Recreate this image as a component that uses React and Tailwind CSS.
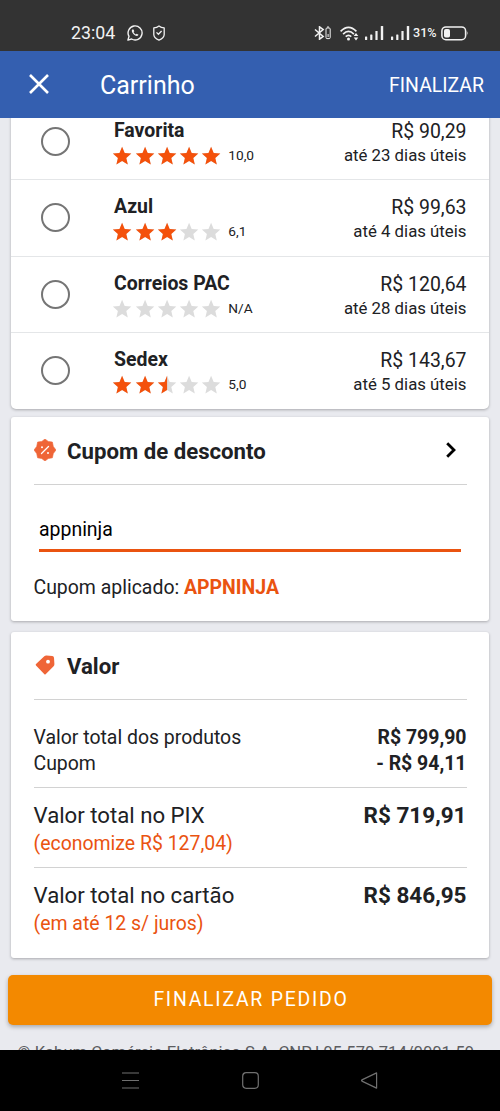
import React from "react";

const STAR = "M12 17.27L18.18 21l-1.64-7.03L22 9.24l-7.19-.61L12 2 9.19 8.63 2 9.24l5.46 4.73L5.82 21z";

function Star({ fill }) {
  return (
    <svg viewBox="0 0 24 24" className="h-[22.2px] w-[22.2px] shrink-0">
      <path d={STAR} fill="#dcdcdc" />
      {fill === 1 && <path d={STAR} fill="#f4510b" />}
      {fill === 0.5 && <path d="M12 2L9.19 8.63 2 9.24l5.46 4.73L5.82 21 12 17.27z" fill="#f4510b" />}
    </svg>
  );
}

function Signal() {
  return (
    <svg viewBox="0 0 19 14" className="h-[14px] w-[19px]" fill="#f2f2f2">
      <rect x="0" y="10.5" width="2.2" height="3.5" rx=".5" />
      <rect x="5.2" y="8.5" width="2.2" height="5.5" rx=".5" />
      <rect x="10.4" y="5" width="2.2" height="9" rx=".5" />
      <rect x="15.8" y="0" width="2.4" height="14" rx=".5" />
    </svg>
  );
}

function StatusBar() {
  return (
    <div className="flex h-[51px] shrink-0 items-end bg-[#333333] pl-[71px] text-[#f2f2f2]">
      <div className="flex h-[36px] w-full items-center">
        <span className="w-[56px] text-[17.800px] leading-none">23:04</span>
        <svg viewBox="0 0 16 16" className="h-[16px] w-[16px]" fill="none" stroke="#f2f2f2" strokeWidth="1.4">
          <path d="M.9 15.1L2 11.4A7 7 0 1 1 4.6 14z" strokeLinejoin="round" />
          <path d="M5.2 4.6c-.9 1-.3 2.8 1.2 4.4s3.600 2.500 4.600 1.500l.5-.8-1.800-1-.9.8C7.900 9.100 7 8.200 6.500 7.100l.8-.8-.8-1.900z" fill="#f2f2f2" stroke="none" />
        </svg>
        <svg viewBox="0 0 12 16" className="ml-[10px] h-[16px] w-[12px]" fill="none" stroke="#f2f2f2" strokeWidth="1.3">
          <path d="M6 .9Q8 2.500 11.200 2.900V9.500Q11.200 13 6 15.100Q.8 13 .8 9.500V2.900Q4 2.500 6 .9z" strokeLinejoin="round" />
          <path d="M3.500 7.400L5.400 9.300L8.600 6" />
        </svg>
        <svg viewBox="0 0 18 14" className="ml-[149px] h-[14px] w-[18px]" fill="none" stroke="#f2f2f2" strokeWidth="1.5">
          <path d="M1 3.500L9.200 10.400L5.500 13.200V.8L9.200 3.600L1 10.500" />
          <rect x="12" y="2" width="4.200" height="10.600" rx="1" strokeWidth="1" />
          <path d="M13 1h2M14.100 8v3" strokeWidth="1" />
        </svg>
        <svg viewBox="0 0 19 15" className="ml-[8px] h-[15px] w-[19px]" fill="none" stroke="#f2f2f2" strokeWidth="1.7">
          <path d="M.6 5.400Q8.500-2.600 16.400 5.400M3.100 8.100Q8.500 2.800 13.900 8.100M5.700 10.700Q8.500 8.200 11.300 10.700" />
          <circle cx="8.500" cy="13" r="1.500" fill="#f2f2f2" stroke="none" />
          <path d="M16 7L18.300 10H13.700zM16 14.500L18.300 11.500H13.700z" fill="#f2f2f2" stroke="none" />
        </svg>
        <div className="ml-[6px] flex items-center gap-[7px]">
          <Signal />
          <Signal />
        </div>
        <span className="ml-[3px] w-[28px] whitespace-nowrap text-[12.600px] font-medium leading-none">31%</span>
        <svg viewBox="0 0 28 15" className="h-[15px] w-[28px]">
          <rect x=".9" y=".9" width="23.700" height="12.800" rx="4" fill="none" stroke="#f2f2f2" strokeWidth="1.500" />
          <rect x="3" y="3" width="6" height="8.600" rx="1.800" fill="#f2f2f2" />
          <path d="M25.800 4.800Q27.600 7.300 25.800 9.800z" fill="#f2f2f2" />
        </svg>
      </div>
    </div>
  );
}

const options = [
  { name: "Favorita", stars: 5, score: "10,0", price: "R$ 90,29", time: "até 23 dias úteis" },
  { name: "Azul", stars: 3, score: "6,1", price: "R$ 99,63", time: "até 4 dias úteis" },
  { name: "Correios PAC", stars: 0, score: "N/A", price: "R$ 120,64", time: "até 28 dias úteis" },
  { name: "Sedex", stars: 2.5, score: "5,0", price: "R$ 143,67", time: "até 5 dias úteis" },
];

function ShippingRow({ option }) {
  return (
    <div className="flex h-[76.400px] pl-[30px] pr-[22.500px] [&:not(:last-child)]:border-b [&:not(:last-child)]:border-[#e4e6e8]">
      <div className="mt-[23px] h-[29px] w-[29px] shrink-0 rounded-full border-[2.900px] border-[#757575]">
      </div>
      <div className="ml-[44px] mt-[14px] flex-1">
        <div className="text-[19.440px] font-bold leading-[26px]">{option.name}</div>
        <div className="-ml-[2.700px] -mt-px flex h-[26px] items-center">
          {[0, 1, 2, 3, 4].map((i) => (
            <Star key={i} fill={Math.max(0, Math.min(1, option.stars - i))} />
          ))}
          <span className="ml-[6px] text-[13.700px] leading-none">{option.score}</span>
        </div>
      </div>
      <div className="mt-[15px] text-right">
        <div className="text-[19.440px] leading-[26px]">{option.price}</div>
        <div className="-mt-[2px] text-[16.800px] leading-[24px]">{option.time}</div>
      </div>
    </div>
  );
}

function Card({ className, children }) {
  return <section className={"mx-[11px] shrink-0 bg-white shadow-[0_1px_3px_rgba(0,0,0,0.28)] " + className}>{children}</section>;
}

function Total({ label, note, value }) {
  return (
    <div className="flex h-[80px] justify-between border-t border-[#d2d2d2] pt-[13px]">
      <div>
        <div className="text-[22.200px] leading-[28px]">{label}</div>
        <div className="mt-px text-[19.440px] leading-[28px] text-[#ea5310]">{note}</div>
      </div>
      <div className="text-[22.500px] font-bold leading-[28px]">{value}</div>
    </div>
  );
}

export default function App() {
  return (
    <div className="flex h-[1111px] w-[500px] flex-col overflow-hidden bg-[#e9eaef] font-['Roboto',sans-serif] text-[#202124]">
      <StatusBar />
      <header className="flex h-[66.500px] shrink-0 items-center bg-[#345fb0] pl-[29px] pr-[16px] text-white">
        <svg viewBox="0 0 20 20" className="h-[20px] w-[20px]" stroke="white" strokeWidth="2.600">
          <path d="M1 1L19 19M19 1L1 19" />
        </svg>
        <h1 className="ml-[51px] flex-1 pt-[2px] text-[25px] leading-none">Carrinho</h1>
        <span className="pt-[3px] text-[19.440px] leading-none">FINALIZAR</span>
      </header>

      <main className="flex h-[932.500px] shrink-0 flex-col overflow-hidden">
        <Card className="-mt-[13.700px] rounded-[5px]">
          {options.map((o) => (
            <ShippingRow key={o.name} option={o} />
          ))}
        </Card>

        <Card className="mt-[7.600px] h-[204px] rounded-[3px] px-[22.500px]">
          <div className="flex h-[68px] items-center border-b border-[#d2d2d2]">
            <svg viewBox="0 0 22 22" className="h-[22px] w-[22px]">
              <path d="M11 0L14.200 2.400L18.400 3.100L19.300 7.500L22 11L19.300 14.500L18.400 18.800L14.200 19.600L11 22L7.800 19.600L3.600 18.800L2.700 14.500L0 11L2.700 7.500L3.600 3.100L7.800 2.400z" fill="#ef6537" stroke="#ef6537" strokeLinejoin="round" strokeWidth=".6" />
              <path d="M7.500 14.500L14.500 7.500" stroke="white" strokeWidth="1.300" strokeLinecap="round" />
              <circle cx="8" cy="8.200" r="1" fill="white" />
              <circle cx="14" cy="13.900" r="1" fill="white" />
            </svg>
            <h2 className="ml-[11.500px] flex-1 pt-px text-[22.200px] font-bold leading-none">Cupom de desconto</h2>
            <svg viewBox="0 0 10 16" className="mr-[11px] h-[16px] w-[10px]" fill="none" stroke="black" strokeWidth="2.800">
              <path d="M1.200 1.200L8 8L1.200 14.800" />
            </svg>
          </div>
          <div className="mx-[5.500px] mt-[27px] h-[40px] border-b-[3px] border-[#ea5310] text-[19.440px] leading-[35px] text-black">appninja</div>
          <p className="mt-[22px] text-[19.440px] leading-[28px]">
            Cupom aplicado: <b className="text-[#ea5310]">APPNINJA</b>
          </p>
        </Card>

        <Card className="mt-[11px] h-[326px] rounded-[3px] px-[22.500px]">
          <div className="flex h-[68px] items-center border-b border-[#d2d2d2]">
            <svg viewBox="0 0 22 22" className="h-[22px] w-[22px]">
              <path d="M2 10L10.300 2.200Q11.200 1.300 12.500 1.400L18.300 2Q19.800 2.200 20 3.700L20.400 10.100Q20.500 11.400 19.600 12.300L11.600 20.300Q11 20.800 10.400 20.300L2 11.600Q1.300 10.800 2 10z" fill="#ef6537" />
              <circle cx="14" cy="7.700" r="1.900" fill="white" />
            </svg>
            <h2 className="ml-[11.500px] pt-px text-[22.200px] font-bold leading-none">Valor</h2>
          </div>
          <div className="h-[87px] pt-[25px] text-[19.440px] leading-[26.400px]">
            <div className="flex justify-between">
              <span>Valor total dos produtos</span>
              <b>R$ 799,90</b>
            </div>
            <div className="flex justify-between">
              <span>Cupom</span>
              <b>- R$ 94,11</b>
            </div>
          </div>
          <Total label="Valor total no PIX" note="(economize R$ 127,04)" value="R$ 719,91" />
          <Total label="Valor total no cartão" note="(em até 12 s/ juros)" value="R$ 846,95" />
        </Card>

        <button className="mx-[8.400px] mt-[17px] h-[50px] shrink-0 rounded-[5px] bg-[#f38900] pl-[2px] text-[19.440px] leading-none tracking-[1.750px] text-white shadow-[0_2px_4px_rgba(0,0,0,0.28)]">
          FINALIZAR PEDIDO
        </button>
        <footer className="mt-[17.500px] shrink-0 whitespace-nowrap pl-[17.500px] text-[16.620px] leading-[22px] text-[#5c5d61]">© Kabum Comércio Eletrônico S.A. CNPJ 05.570.714/0001-59</footer>
      </main>

      <nav className="flex h-[61px] shrink-0 items-center bg-black pl-[122px]">
        <svg viewBox="0 0 17 17" className="h-[17px] w-[17px]" stroke="#707070" strokeWidth="1.200">
          <path d="M0 1H17M0 8.500H17M0 16H17" />
        </svg>
        <svg viewBox="0 0 17 17" className="ml-[102.500px] h-[17px] w-[17px]" fill="none" stroke="#707070" strokeWidth="1.200">
          <rect x=".7" y=".7" width="15.600" height="15.600" rx="3.500" />
        </svg>
        <svg viewBox="0 0 17 17" className="ml-[102.500px] h-[17px] w-[17px]" fill="none" stroke="#707070" strokeWidth="1.200" strokeLinejoin="round">
          <path d="M15.600.9V16.100L.9 9.100Q.2 8.500 .9 7.900z" />
        </svg>
      </nav>
    </div>
  );
}
